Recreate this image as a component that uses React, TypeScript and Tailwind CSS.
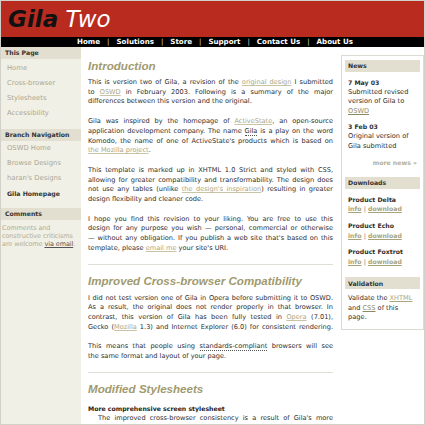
import React from "react";

type C = { children?: React.ReactNode };

const J = ({ children }: C) => (
  <div className="text-justify [text-align-last:justify]">{children}</div>
);
const L = ({ children }: C) => <div>{children}</div>;
const A = ({ children }: C) => (
  <span className="text-[#aba57f] underline decoration-[#c9c4a6]">{children}</span>
);
const Dot = ({ children }: C) => (
  <span className="border-b border-dotted border-[#555]">{children}</span>
);

const Band = ({ children, cls = "" }: C & { cls?: string }) => (
  <div className={`h-[12px] flex items-center bg-[#e2dfd1] font-bold text-[6.2px] text-[#333] ${cls}`}>
    {children}
  </div>
);

const H2 = ({ children, cls = "" }: C & { cls?: string }) => (
  <h2
    className={`font-['Liberation_Sans',Arial,sans-serif] italic font-bold text-[11.6px] leading-[14px] text-[#a09a6e] ${cls}`}
  >
    {children}
  </h2>
);

export default function App() {
  const nav = ["Home", "Solutions", "Store", "Support", "Contact Us", "About Us"];
  return (
    <div className="w-[425px] h-[425px] overflow-hidden bg-white border border-[#d2d1c9] flex flex-col font-['DejaVu_Sans',Verdana,sans-serif] text-[#2e2e2e]">
      <header className="h-[36px] bg-[#b92b1f] pt-[7px] pl-[7px] shrink-0">
        <div className="text-[23px] leading-[23px] italic">
          <span className="font-bold text-[#111]">Gila</span>{" "}
          <span className="text-white">Two</span>
        </div>
      </header>
      <nav className="h-[10px] bg-black flex items-center justify-center pl-[5px] text-white font-bold text-[7.1px] leading-none shrink-0">
        {nav.map((n, i) => (
          <React.Fragment key={n}>
            {i > 0 && <span className="mx-[7px] font-normal text-[#ddd]">|</span>}
            <span>{n}</span>
          </React.Fragment>
        ))}
      </nav>
      <div className="flex flex-1 min-h-0">
        <aside className="w-[80px] shrink-0 bg-[#f1f0e6]">
          <Band cls="pl-[4px]">This Page</Band>
          <div className="pt-[2px] pl-[6px] text-[6.8px] leading-[15px] text-[#aba791]">
            <div>Home</div>
            <div>Cross-browser</div>
            <div>Stylesheets</div>
            <div>Accessibility</div>
          </div>
          <Band cls="pl-[4px] mt-[8px]">Branch Navigation</Band>
          <div className="pl-[6px] text-[6.8px] leading-[15px] text-[#aba791]">
            <div>OSWD Home</div>
            <div>Browse Designs</div>
            <div>haran's Designs</div>
            <div className="font-bold text-[6.2px] text-[#333]">Gila Homepage</div>
          </div>
          <Band cls="pl-[4px] mt-[7px]">Comments</Band>
          <div className="pt-[4px] pl-[1px] text-[6.5px] tracking-[-0.1px] leading-[8px] text-[#b1ad94] whitespace-nowrap">
            <div>Comments and</div>
            <div>constructive criticisms</div>
            <div>
              are welcome <span className="text-[#555] underline">via email</span>.
            </div>
          </div>
        </aside>

        <main className="w-[245px] shrink-0 ml-[7px] pt-[12px] text-[6.6px] leading-[9.7px]">
          <H2 cls="mb-[5px]">Introduction</H2>
          <div className="mb-[10px]">
            <J>
              This is version two of Gila, a revision of the <A>original design</A> I submitted
            </J>
            <J>
              to <A>OSWD</A> in February 2003. Following is a summary of the major
            </J>
            <L>differences between this version and the original.</L>
          </div>
          <div className="mb-[10px]">
            <J>
              Gila was inspired by the homepage of <A>ActiveState</A>, an open-source
            </J>
            <J>
              application development company. The name <Dot>Gila</Dot> is a play on the word
            </J>
            <J>Komodo, the name of one of ActiveState's products which is based on</J>
            <L>
              <A>the Mozilla project</A>.
            </L>
          </div>
          <div className="mb-[10px]">
            <J>This template is marked up in XHTML 1.0 Strict and styled with CSS,</J>
            <J>allowing for greater compatibility and transformability. The design does</J>
            <J>
              not use any tables (unlike <A>the design's inspiration</A>) resulting in greater
            </J>
            <L>design flexibility and cleaner code.</L>
          </div>
          <div>
            <J>I hope you find this revision to your liking. You are free to use this</J>
            <J>design for any purpose you wish — personal, commercial or otherwise</J>
            <J>— without any obligation. If you publish a web site that's based on this</J>
            <L>
              template, please <A>email me</A> your site's URI.
            </L>
          </div>
          <div className="mt-[10px] mb-[9px] border-t border-[#e0ded4]" />
          <H2 cls="mb-[6px]">Improved Cross-browser Compatibility</H2>
          <div className="mb-[10px]">
            <J>I did not test version one of Gila in Opera before submitting it to OSWD.</J>
            <J>As a result, the original does not render properly in that browser. In</J>
            <J>
              contrast, this version of Gila has been fully tested in <A>Opera</A> (7.01),
            </J>
            <J>
              Gecko (<A>Mozilla</A> 1.3) and Internet Explorer (6.0) for consistent rendering.
            </J>
          </div>
          <div>
            <J>
              This means that people using <Dot>standards-compliant</Dot> browsers will see
            </J>
            <L>the same format and layout of your page.</L>
          </div>
          <div className="mt-[10px] mb-[9px] border-t border-[#e0ded4]" />
          <H2 cls="mb-[8px]">Modified Stylesheets</H2>
          <h3 className="font-bold text-[6.2px] leading-[9.7px] mb-[1px] text-[#222]">
            More comprehensive screen stylesheet
          </h3>
          <div className="pl-[10px]">
            <J>The improved cross-browser consistency is a result of Gila's more</J>
          </div>
        </main>

        <aside className="ml-[8px] mt-[8px] w-[83px] shrink-0 self-start border border-[#dcdbd3] px-[3px] pt-[4px] pb-[6px] text-[6.6px] leading-[9.6px]">
          <Band cls="pl-[3px]">News</Band>
          <div className="pl-[3px] mt-[6px]">
            <div className="font-bold text-[6.2px]">7 May 03</div>
            <div>Submitted revised</div>
            <div>version of Gila to</div>
            <div>
              <span className="text-[#8e8962] underline">OSWD</span>
            </div>
          </div>
          <div className="pl-[3px] mt-[6px]">
            <div className="font-bold text-[6.2px]">3 Feb 03</div>
            <div>Original version of</div>
            <div>Gila submitted</div>
          </div>
          <div className="mt-[7px] pr-[3px] text-right font-bold text-[6.2px] text-[#b3ae94]">
            more news »
          </div>
          <Band cls="pl-[3px] mt-[9px]">Downloads</Band>
          {["Product Delta", "Product Echo", "Product Foxtrot"].map((p, i) => (
            <div key={p} className={`pl-[3px] ${i === 0 ? "mt-[6px]" : "mt-[7px]"}`}>
              <div className="font-bold text-[6.2px]">{p}</div>
              <div className="font-bold text-[6.2px] text-[#a9a37b]">
                <span className="underline">info</span> <span className="text-[#999]">|</span>{" "}
                <span className="underline">download</span>
              </div>
            </div>
          ))}
          <Band cls="pl-[3px] mt-[11px]">Validation</Band>
          <div className="pl-[3px] mt-[5px] leading-[9.4px]">
            <div>
              Validate the <span className="text-[#aba57f] underline">XHTML</span>
            </div>
            <div>
              and <span className="text-[#8e8962] underline">CSS</span> of this
            </div>
            <div>page.</div>
          </div>
        </aside>
      </div>
    </div>
  );
}
